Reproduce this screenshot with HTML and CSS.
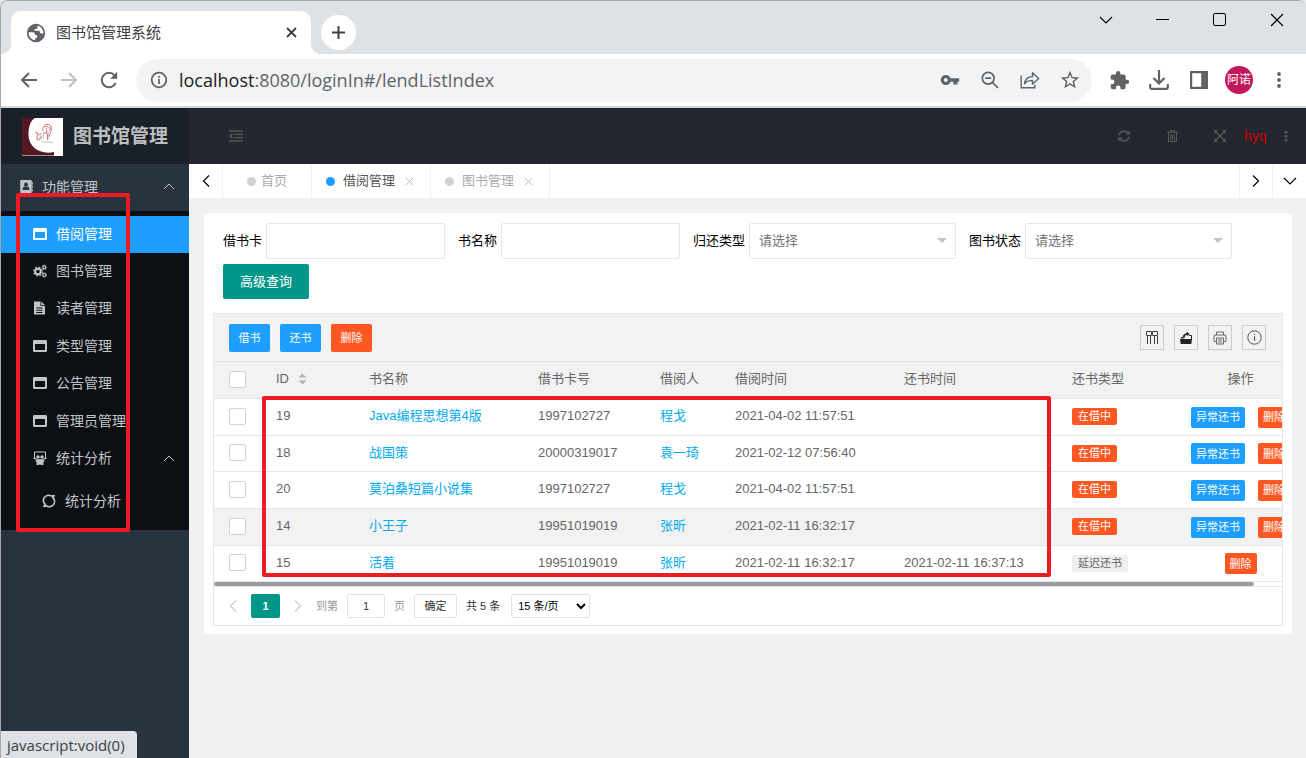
FILE: index.html
```html
<!DOCTYPE html>
<html lang="zh-CN">
<head>
<meta charset="utf-8">
<title>图书馆管理系统</title>
<link rel="stylesheet" href="styles.css">
</head>
<body>
<svg class="sprite" aria-hidden="true">
  <symbol id="i-window" viewBox="0 0 14 12"><path fill="currentColor" fill-rule="evenodd" d="M1.200 0h11.600Q14 0 14 1.200v9.600Q14 12 12.800 12H1.200Q0 12 0 10.800V1.200Q0 0 1.200 0zM2 4v6h10V4z"/></symbol>
  <symbol id="i-left" viewBox="0 0 8 14"><path fill="none" stroke="currentColor" stroke-width="1.200" d="M7 1.500 1.500 7 7 12.500"/></symbol>
  <symbol id="i-right" viewBox="0 0 8 14"><path fill="none" stroke="currentColor" stroke-width="1.200" d="M1 1.500 6.500 7 1 12.500"/></symbol>
  <symbol id="i-up" viewBox="0 0 12 7"><path fill="none" stroke="currentColor" d="M1 6 6 1l5 5"/></symbol>
  <symbol id="i-down" viewBox="0 0 14 8"><path fill="none" stroke="currentColor" stroke-width="1.100" d="M1 1l6 6 6-6"/></symbol>
  <symbol id="i-x" viewBox="0 0 14 14"><path fill="none" stroke="currentColor" stroke-width="1.200" d="M1 1l12 12M13 1 1 13"/></symbol>
  <symbol id="i-close" viewBox="0 0 9 9"><path fill="none" stroke="currentColor" d="M1 1l7 7M8 1 1 8"/></symbol>
</svg>
<div class="window">
  <div class="tabstrip">
    <div class="tab">
      <svg width="20" height="20" viewBox="0 0 24 24"><path fill="#5f6368" d="M12 1a11 11 0 1 0 0 22 11 11 0 0 0 0-22zM11 20.600C6.600 20.100 3.200 16.400 3.200 12l.1-.9h5c1.500 0 2.300 1 2.300 2.200 0 .9.700 1.300 1.500 1.300h1.400v1.600c0 1-.8 1.600-1.500 1.900-.7.300-1 .9-1 1.500zM20.800 12.500h-2.600c-1 0-1.500-.7-1.500-1.600 0-1-.8-1.700-1.800-1.700h-4c-.6 0-1-.4-1-1s.4-1 1-1h1.200c1.100 0 1.600-.8 1.600-1.600V3.300c4.100.7 7.200 4.300 7.200 8.700z"/></svg>
      <span class="tab-title">图书馆管理系统</span>
      <button class="tab-close" aria-label="关闭标签页"><svg width="11" height="11" viewBox="0 0 11 11"><path stroke="#3c4043" stroke-width="1.800" d="M1 1l9 9M10 1l-9 9"/></svg></button>
    </div>
    <button class="new-tab" aria-label="新标签页"><svg width="13" height="13" viewBox="0 0 13 13"><path stroke="#3c4043" stroke-width="2" d="M6.500 0v13M0 6.500h13"/></svg></button>
    <div class="window-controls">
      <button aria-label="标签搜索"><svg width="14" height="8"><use href="#i-down"/></svg></button>
      <button aria-label="最小化"><svg width="13" height="13" viewBox="0 0 13 13"><path stroke="#000" d="M0 6.500h13"/></svg></button>
      <button aria-label="最大化"><svg width="13" height="13" viewBox="0 0 13 13"><rect x=".5" y=".5" width="12" height="12" rx="1.500" fill="none" stroke="#000"/></svg></button>
      <button aria-label="关闭"><svg width="14" height="14"><use href="#i-x"/></svg></button>
    </div>
  </div>

  <div class="toolbar">
    <button class="tool" aria-label="后退"><svg width="18" height="16" viewBox="0 0 18 16"><path fill="none" stroke="#5f6368" stroke-width="2" d="M17 8H2M9 1 2 8l7 7"/></svg></button>
    <button class="tool" aria-label="前进"><svg width="18" height="16" viewBox="0 0 18 16"><path fill="none" stroke="#bdc1c6" stroke-width="2" d="M1 8h15M9 1l7 7-7 7"/></svg></button>
    <button class="tool" aria-label="刷新"><svg width="18" height="18" viewBox="0 0 18 18"><path fill="none" stroke="#5f6368" stroke-width="2" d="M15.600 12A7.200 7.200 0 1 1 14.500 4.400"/><path fill="#5f6368" d="M17.200.800v7h-7z"/></svg></button>
    <div class="omnibox">
      <svg width="18" height="18" viewBox="0 0 18 18"><circle cx="9" cy="9" r="7.300" fill="none" stroke="#5f6368" stroke-width="1.800"/><path fill="#5f6368" d="M8.100 8h1.800v5H8.100zM8.100 5h1.800v1.800H8.100z"/></svg>
      <span class="url"><b>localhost</b>:8080/loginIn#/lendListIndex</span>
      <button class="tool" aria-label="密码"><svg width="20" height="20" viewBox="0 0 24 24"><path fill="#5f6368" d="M12.650 10A6 6 0 0 0 7 6c-3.310 0-6 2.690-6 6s2.690 6 6 6a6 6 0 0 0 5.650-4H16v3.500h5V14h2v-4H12.650zM7 14.300a2.300 2.300 0 1 1 0-4.600 2.300 2.300 0 0 1 0 4.600z"/></svg></button>
      <button class="tool" aria-label="缩放"><svg width="18" height="18" viewBox="0 0 18 18"><g fill="none" stroke="#5f6368" stroke-width="1.700"><circle cx="7.200" cy="7.200" r="5.900"/><path d="M11.500 11.500 17 17M4.300 7.200h5.800"/></g></svg></button>
      <button class="tool" aria-label="分享"><svg width="20" height="18" viewBox="0 0 20 18"><g fill="none" stroke="#5f6368" stroke-width="1.400"><path d="M1.200 4.500v12.300h13.600v-3"/><path stroke-linejoin="round" d="M4.500 12.800c.6-4.600 3.200-7 8-7.200V1.800l6.200 5.700-6.200 5.600V9.400c-3.600 0-6 .9-8 3.400z"/></g></svg></button>
      <button class="tool" aria-label="收藏"><svg width="22" height="22" viewBox="0 0 24 24"><path fill="#5f6368" d="m22 9.240-7.190-.62L12 2 9.190 8.630 2 9.240l5.460 4.730L5.820 21 12 17.270 18.180 21l-1.630-7.030L22 9.240zM12 15.400l-3.760 2.270 1-4.280-3.320-2.880 4.380-.38L12 6.100l1.710 4.040 4.380.38-3.320 2.880 1 4.280L12 15.400z"/></svg></button>
    </div>
    <button class="tool" aria-label="扩展程序"><svg width="21" height="21" viewBox="0 0 24 24"><path fill="#5f6368" d="M20.500 11H19V7a2 2 0 0 0-2-2h-4V3.500a2.500 2.500 0 0 0-5 0V5H4a2 2 0 0 0-1.990 2v3.800H3.500a2.700 2.700 0 0 1 0 5.400H2V20a2 2 0 0 0 2 2h3.800v-1.500a2.700 2.700 0 0 1 5.400 0V22H17a2 2 0 0 0 2-2v-4h1.500a2.500 2.500 0 0 0 0-5z"/></svg></button>
    <button class="tool" aria-label="下载"><svg width="20" height="20" viewBox="0 0 20 20"><path fill="none" stroke="#5f6368" stroke-width="2.200" d="M10 0v13M4.500 8 10 13.500 15.500 8M1.200 14v3.500q0 1.300 1.300 1.300h15q1.300 0 1.300-1.300V14"/></svg></button>
    <button class="tool" aria-label="侧边栏"><svg width="18" height="18" viewBox="0 0 18 18"><path fill="#5f6368" fill-rule="evenodd" d="M0 0h18v18H0zM2.200 2.200v13.600h9V2.200z"/></svg></button>
    <button class="tool" aria-label="用户"><span class="avatar">阿诺</span></button>
    <button class="tool" aria-label="菜单"><svg width="4" height="16" viewBox="0 0 4 16"><g fill="#5f6368"><circle cx="2" cy="2" r="1.900"/><circle cx="2" cy="8" r="1.900"/><circle cx="2" cy="14" r="1.900"/></g></svg></button>
  </div>

  <div class="app">
    <aside class="side">
      <div class="brand">
        <svg width="41" height="38" viewBox="0 0 41 38"><rect width="41" height="38" fill="#541820"/><path fill="#fff" d="M13 0h28v38h-9v-4C18 37 6.500 29 6.500 17 6.500 9 8 3 13 0z"/><path stroke="#a98a8e" d="M0 37.500h32"/><g fill="none" stroke="#d4696c" stroke-width=".9"><path d="M13.500 14c1.500 1 2.500 2 2 4s-1.500 4 .5 4 3-2 3.500-4.500M14 14l4 3 1.500-2M21 13c-1-4 1-6 4-6.500s5 2 4.500 5-2 4-2 7M22 9.500c2-2 4-1 5 1M21.500 16c1-2 3-2 4 0v6M24 10c1 2 1 4 0 6M28 8c1 1.500.5 4-1 5"/><path stroke="#999" stroke-width=".6" d="M20 23.500l5 .5 6 .5M26 13l1 8M17 19l3 3M15 22l4-3M22 14l-1 7"/></g></svg>
        <strong>图书馆管理</strong>
      </div>
      <nav class="menu">
        <a class="group" href="#">
          <svg width="13" height="13" viewBox="0 0 13 13"><path fill="currentColor" d="M1.200 0h9.600q1 0 1 1v11q0 1-1 1H1.200q-1 0-1-1V1q0-1 1-1zM12.200 2h.8v2.500h-.8zM12.200 5.500h.8V8h-.8zM12.200 9h.8v2.500h-.8z"/><circle cx="6" cy="4.500" r="1.900" fill="#28333e"/><path fill="#28333e" d="M2.700 10V8.500Q2.700 7 4.500 6.600h3Q9.300 7 9.300 8.500V10z"/></svg>
          <span>功能管理</span>
          <svg class="caret" width="12" height="7"><use href="#i-up"/></svg>
        </a>
        <ul class="submenu">
          <li><a class="active" href="#"><svg width="14" height="12"><use href="#i-window"/></svg>借阅管理</a></li>
          <li><a href="#"><svg width="14" height="14" viewBox="0 0 14 14"><g fill="none" stroke="currentColor"><circle cx="5" cy="7.500" r="2.800" stroke-width="2"/><circle cx="5" cy="7.500" r="4.300" stroke-width="1.300" stroke-dasharray="1.700 1.677"/><circle cx="11.300" cy="3.300" r="1.500" stroke-width="1.200"/><circle cx="11.300" cy="3.300" r="2.300" stroke-width=".8" stroke-dasharray="1 .8"/><circle cx="11.300" cy="11" r="1.500" stroke-width="1.200"/><circle cx="11.300" cy="11" r="2.300" stroke-width=".8" stroke-dasharray="1 .8"/></g></svg>图书管理</a></li>
          <li><a href="#"><svg width="14" height="14" viewBox="0 0 14 14"><path fill="currentColor" fill-rule="evenodd" d="M1 .5h6.500V5H12v8.500H1zM8.300.5 12 4.200H8.300zM3.300 6.500v1h6.200v-1zM3.300 8.700v1h6.200v-1zM3.300 10.900v1h6.200v-1z"/></svg>读者管理</a></li>
          <li><a href="#"><svg width="14" height="12"><use href="#i-window"/></svg>类型管理</a></li>
          <li><a href="#"><svg width="14" height="12"><use href="#i-window"/></svg>公告管理</a></li>
          <li><a href="#"><svg width="14" height="12"><use href="#i-window"/></svg>管理员管理</a></li>
          <li><a href="#"><svg width="14" height="14" viewBox="0 0 14 14"><path fill="none" stroke="currentColor" d="M1.500 7V1h11v6M.3 7.500h3M10.700 7.500h3"/><g fill="currentColor"><circle cx="5" cy="6" r="1.800"/><circle cx="9" cy="6" r="1.800"/><path d="M2.600 8.200h8.800v2.600h-1V14H7.400v-1h-.8v1h-3v-3.200h-1z"/></g></svg>统计分析<svg class="caret" width="12" height="7"><use href="#i-up"/></svg></a></li>
        </ul>
        <ul class="submenu nested">
          <li><a href="#"><svg width="14" height="14" viewBox="0 0 14 14"><g fill="none" stroke="currentColor" stroke-width="1.600"><path d="M12.800 1.500 9.300 2A5 5 0 0 0 3.900 11M1.200 12.500l3.500-.5a5 5 0 0 0 5.400-9"/><path stroke-width="1.200" d="M12.800 1.500 10.100 3.500M1.200 12.500 4 10.600"/></g></svg>统计分析</a></li>
        </ul>
      </nav>
      <div class="mark mark-menu"></div>
    </aside>

    <main class="main">
      <header class="topbar">
        <button aria-label="收起菜单"><svg width="14" height="12" viewBox="0 0 14 12"><path stroke="currentColor" stroke-width="1.300" d="M0 1h14M5 4.300h9M5 7.600h9M0 11h14"/><path fill="currentColor" d="M3.500 3v6L0 6z"/></svg></button>
        <span class="spacer"></span>
        <button aria-label="刷新"><svg width="12" height="12" viewBox="0 0 12 12"><g fill="none" stroke="currentColor" stroke-width="1.700"><path d="M1 5.200A5 5 0 0 1 9.800 3M11 6.800A5 5 0 0 1 2.200 9"/></g><path fill="currentColor" d="M12 .5v4.300H7.700zM0 11.500V7.200h4.300z"/></svg></button>
        <button aria-label="清理缓存"><svg width="11" height="12" viewBox="0 0 11 12"><g fill="none" stroke="currentColor" stroke-width="1.100"><path d="M0 2.300h11M3.300 2.300V.6h4.400v1.700M1.500 2.500v8.900h8V2.500M3.700 4.500V9.800M5.500 4.500V9.800M7.300 4.500V9.800"/></g></svg></button>
        <button aria-label="全屏"><svg width="12" height="12" viewBox="0 0 12 12"><path stroke="currentColor" stroke-width="1.600" d="M2 2l8 8M10 2l-8 8"/><path fill="currentColor" d="M0 0h4.200L0 4.200zM12 0v4.200L7.800 0zM0 12V7.800L4.200 12zM12 12H7.800L12 7.800z"/></svg></button>
        <a class="user" href="#">hyq</a>
        <button class="more" aria-label="更多"><svg width="4" height="11" viewBox="0 0 4 11"><path fill="currentColor" d="M.5 0h3v2.600h-3zM.5 4h3v2.600h-3zM.5 8h3v2.600h-3z"/></svg></button>
      </header>

      <div class="pages">
        <button class="page-nav first" aria-label="向左"><svg width="8" height="14"><use href="#i-left"/></svg></button>
        <a class="page home" href="#"><i></i>首页</a>
        <a class="page current" href="#"><i></i>借阅管理<svg width="9" height="9"><use href="#i-close"/></svg></a>
        <a class="page" href="#"><i></i>图书管理<svg width="9" height="9"><use href="#i-close"/></svg></a>
        <span class="spacer"></span>
        <button class="page-nav" aria-label="向右"><svg width="8" height="14"><use href="#i-right"/></svg></button>
        <button class="page-nav last" aria-label="页面操作"><svg width="14" height="8"><use href="#i-down"/></svg></button>
      </div>

      <section class="card">
        <form class="search">
          <div class="field"><label for="card">借书卡</label><input id="card" type="text"></div>
          <div class="field"><label for="book">书名称</label><input id="book" type="text"></div>
          <div class="field"><label for="kind">归还类型</label><span class="pick"><select id="kind"><option>请选择</option></select></span></div>
          <div class="field"><label for="state">图书状态</label><span class="pick"><select id="state"><option>请选择</option></select></span></div>
          <button class="query" type="button">高级查询</button>
        </form>

        <div class="grid">
          <div class="grid-tools">
            <button class="btn blue">借书</button>
            <button class="btn blue">还书</button>
            <button class="btn red">删除</button>
            <span class="spacer"></span>
            <button class="icon-btn" aria-label="筛选列"><svg width="14" height="14" viewBox="0 0 14 14"><path fill="none" stroke="#444" d="M1.500.5h5v4h-5zM7.500.5h5v4h-5zM2.500 5v8M5.500 5v8M9.500 5v8M12.500 5v8"/></svg></button>
            <button class="icon-btn" aria-label="导出"><svg width="14" height="14" viewBox="0 0 14 14"><path fill="#222" d="M1 8h12l-.7 5H1.700zM2 7.500V6h3v1.500zM5.700 7c0-2 .5-3 2-3.200V5.200L10.700 3 7.700.8V2C5 2.500 3.700 4.500 3.700 6z"/><path fill="none" stroke="#222" d="M10 4.500h2.500V8"/></svg></button>
            <button class="icon-btn" aria-label="打印"><svg width="14" height="14" viewBox="0 0 14 14"><g fill="none" stroke="#666"><path d="M3.500 4V1h7v3M3 10.500H1.500Q1 10.500 1 10V5Q1 4 2 4h10q1 0 1 1v5q0 .5-.5.500H11M3.500 7h7v6h-7zM5 9h4M5 11h4"/></g></svg></button>
            <button class="icon-btn" aria-label="提示"><svg width="15" height="15" viewBox="0 0 15 15"><circle cx="7.500" cy="7.500" r="6.700" fill="none" stroke="#555"/><path fill="#555" d="M7 6.300h1.100v4.500H7zM7 3.900h1.100V5H7z"/></svg></button>
          </div>
          <div class="grid-scroll">
            <table>
              <colgroup><col class="w-check"><col class="w-id"><col class="w-wide"><col class="w-card"><col class="w-name"><col class="w-wide"><col class="w-back"><col class="w-type"><col class="w-op"></colgroup>
              <thead>
                <tr><th><input type="checkbox" aria-label="全选"></th><th>ID<svg class="sort" width="9" height="12" viewBox="0 0 9 12"><path fill="#b2b2b2" d="M.500 4.500 4.500.500l4 4zM.500 7.500l4 4 4-4z"/></svg></th><th>书名称</th><th>借书卡号</th><th>借阅人</th><th>借阅时间</th><th>还书时间</th><th>还书类型</th><th class="op">操作</th></tr>
              </thead>
              <tbody>
                <tr><td><input type="checkbox" aria-label="选择 19"></td><td>19</td><td><a href="#">Java编程思想第4版</a></td><td>1997102727</td><td><a href="#">程戈</a></td><td>2021-04-02 11:57:51</td><td></td><td><span class="badge">在借中</span></td><td class="op"><button class="mini blue">异常还书</button><button class="mini red">删除</button></td></tr>
                <tr><td><input type="checkbox" aria-label="选择 18"></td><td>18</td><td><a href="#">战国策</a></td><td>20000319017</td><td><a href="#">袁一琦</a></td><td>2021-02-12 07:56:40</td><td></td><td><span class="badge">在借中</span></td><td class="op"><button class="mini blue">异常还书</button><button class="mini red">删除</button></td></tr>
                <tr><td><input type="checkbox" aria-label="选择 20"></td><td>20</td><td><a href="#">莫泊桑短篇小说集</a></td><td>1997102727</td><td><a href="#">程戈</a></td><td>2021-04-02 11:57:51</td><td></td><td><span class="badge">在借中</span></td><td class="op"><button class="mini blue">异常还书</button><button class="mini red">删除</button></td></tr>
                <tr class="hover"><td><input type="checkbox" aria-label="选择 14"></td><td>14</td><td><a href="#">小王子</a></td><td>19951019019</td><td><a href="#">张昕</a></td><td>2021-02-11 16:32:17</td><td></td><td><span class="badge">在借中</span></td><td class="op"><button class="mini blue">异常还书</button><button class="mini red">删除</button></td></tr>
                <tr><td><input type="checkbox" aria-label="选择 15"></td><td>15</td><td><a href="#">活着</a></td><td>19951019019</td><td><a href="#">张昕</a></td><td>2021-02-11 16:32:17</td><td>2021-02-11 16:37:13</td><td><span class="badge grey">延迟还书</span></td><td class="op"><button class="mini red">删除</button></td></tr>
              </tbody>
            </table>
            <div class="scrollbar"><div class="thumb"></div></div>
            <div class="mark mark-rows"></div>
          </div>
          <div class="pager">
            <button class="step" aria-label="上一页"><svg width="8" height="14"><use href="#i-left"/></svg></button>
            <button class="page-no">1</button>
            <button class="step" aria-label="下一页"><svg width="8" height="14"><use href="#i-right"/></svg></button>
            <label for="goto">到第</label>
            <input id="goto" type="text" value="1">
            <span class="muted">页</span>
            <button class="ok">确定</button>
            <span>共 5 条</span>
            <select aria-label="每页条数"><option>15 条/页</option></select>
          </div>
        </div>
      </section>
    </main>
  </div>
  <div class="status">javascript:void(0)</div>
</div>
</body>
</html>
```
FILE: styles.css
```css
* { box-sizing: border-box; }
body {
  margin: 0;
  background: #e8e8e8;
  font: 13px/20px "Liberation Sans", "Noto Sans CJK SC", sans-serif;
  color: #000;
}
button, input, select { font: inherit; color: inherit; margin: 0; }
button { border: 0; padding: 0; background: none; cursor: pointer; display: flex; align-items: center; justify-content: center; }
a { color: inherit; text-decoration: none; }
ul { list-style: none; margin: 0; padding: 0; }
svg { flex: none; }
.sprite { display: none; }
.spacer { flex: 1; }

.window {
  position: relative;
  display: flex;
  flex-direction: column;
  height: 100vh;
  border-top: 1px solid #a8a8a8;
  border-left: 1px solid #a8a8a8;
  border-radius: 8px 8px 0 0;
  background: #fff;
  overflow: hidden;
}

/* Browser tabs */
.tabstrip { display: flex; height: 53px; padding-left: 10px; background: #dee1e6; flex: none; }
.tab {
  position: relative;
  display: flex;
  align-items: center;
  width: 300px;
  height: 43px;
  margin-top: 10px;
  padding: 0 14px 0 15px;
  border-radius: 10px 10px 0 0;
  background: #fff;
}
.tab::before, .tab::after { content: ""; position: absolute; bottom: 0; width: 10px; height: 10px; }
.tab::before { right: 100%; background: radial-gradient(circle at 0 0, #dee1e6 10px, #fff 10px); }
.tab::after { left: 100%; background: radial-gradient(circle at 100% 0, #dee1e6 10px, #fff 10px); }
.tab-title { flex: 1; margin-left: 10px; font-size: 15px; color: #3c4043; }
.tab-close { width: 12px; height: 20px; }
.new-tab { width: 35px; height: 35px; margin: 14px 0 0 10px; border-radius: 50%; background: #fff; }
.window-controls { display: flex; margin-left: auto; padding-right: 1px; }
.window-controls button { width: 57px; height: 37px; }

/* Browser toolbar */
.toolbar { display: flex; align-items: center; height: 54px; padding: 0 7px 0 8px; border-bottom: 2px solid #d6d9dc; background: #fff; flex: none; }
.tool { width: 40px; height: 40px; flex: none; }
.omnibox { display: flex; align-items: center; flex: 1; height: 43px; margin: 0 7px; padding: 0 2px 0 14px; border-radius: 22px; background: #f1f3f4; }
.url { flex: 1; margin-left: 11px; font: 18px/24px "Open Sans", sans-serif; color: #5f6368; }
.url b { font-weight: 400; color: #202124; }
.avatar { width: 28px; height: 28px; border-radius: 50%; background: #c2185b; color: #fff; font-size: 12px; line-height: 28px; text-align: center; }

/* Sidebar */
.app { display: flex; flex: 1; min-height: 0; }
.side { position: relative; width: 188px; background: #28333e; color: #c2c5c8; flex: none; }
.brand { display: flex; align-items: center; gap: 10px; height: 56px; padding: 2px 0 0 21px; background: #192027; color: #bcbdbf; }
.brand strong { font-size: 19px; line-height: 28px; }
.menu { font-size: 14px; }
.menu a { display: flex; align-items: center; height: 100%; padding: 0 14px 2px 32px; gap: 9px; white-space: nowrap; }
.menu .group { height: 47px; padding-left: 19px; }
.caret { margin-left: auto; }
.submenu { padding-top: 5px; background: #0c0f13; }
.submenu li { height: 37px; }
.submenu li:nth-child(odd):not(:first-child) { height: 38px; }
.submenu .active { background: #1e9fff; color: #fff; }
.nested { padding-bottom: 10px; }
.menu .nested a { padding-left: 41px; }

.mark { position: absolute; border: 4px solid #ed1c24; border-radius: 2px; pointer-events: none; }
.mark-menu { left: 15px; top: 85px; width: 114px; height: 339px; }
.mark-rows { left: 48px; top: 34px; width: 789px; height: 181px; }

/* Application header and page tabs */
.main { flex: 1; min-width: 0; background: #f1f1f1; }
.topbar { display: flex; align-items: center; height: 56px; padding: 0 16px 0 23px; background: #23262e; color: #555; }
.topbar button { width: 48px; height: 48px; }
.topbar .more { width: 8px; }
.user { width: 38px; font-size: 14px; color: #c80000; }
.pages { display: flex; height: 34px; background: #fff; }
.page, .page-nav { display: flex; align-items: center; height: 34px; }
.page-nav { width: 33px; border-left: 1px solid #f1f1f1; }
.page-nav.first { border-left: 0; border-right: 1px solid #f1f1f1; width: 34px; }
.page-nav.last { width: 34px; }
.page { padding: 0 16px 0 14px; border-right: 1px solid #f1f1f1; color: #aaa; }
.page i { width: 9px; height: 9px; margin-right: 8px; border-radius: 50%; background: #d2d2d2; }
.page svg { margin-left: 10px; color: #bbb; }
.page.current { color: #555; }
.page.current i { background: #1e9fff; }
.page.home { padding: 0 24px; }
.page.home i { margin-right: 5px; }

/* Search form */
.card { margin: 15px 14px 0 15px; padding: 10px 9px 8px; border-radius: 4px; background: #fff; }
.search { display: flex; flex-wrap: wrap; gap: 5px 13px; padding: 0 10px; }
.field { display: flex; align-items: center; gap: 4px; }
.field input, .field select { height: 36px; border: 1px solid #e6e6e6; border-radius: 2px; background: #fff; outline: 0; }
.field input { width: 179px; padding: 0 10px; }
.pick { position: relative; display: block; }
.pick::after { content: ""; position: absolute; right: 9px; top: 15px; border: 5px solid transparent; border-top-color: #c2c2c2; pointer-events: none; }
.pick select { appearance: none; display: block; width: 207px; padding: 0 9px; color: #757575; }
.query { width: 86px; height: 35px; border-radius: 2px; background: #009688; color: #fff; }

/* Data grid */
.grid { margin-top: 14px; border: 1px solid #e6e6e6; }
.grid-tools { display: flex; align-items: center; gap: 10px; height: 48px; padding: 0 16px 0 15px; border-bottom: 1px solid #e6e6e6; background: #f2f2f2; }
.btn, .mini { border-radius: 2px; color: #fff; font-size: 11px; }
.btn { width: 41px; height: 28px; }
.blue { background: #1e9fff; }
.red { background: #ff5722; }
.icon-btn { width: 24px; height: 25px; border: 1px solid #ccc; }
.grid-scroll { position: relative; overflow: hidden; }
table { width: 100%; min-width: 1097px; table-layout: fixed; border-collapse: separate; border-spacing: 0; color: #666; }
.w-check { width: 48px; }
.w-id { width: 93px; }
.w-wide { width: 169px; }
.w-card { width: 122px; }
.w-name { width: 75px; }
.w-back { width: 168px; }
.w-type { width: 112px; }
.w-op { width: 141px; }
th, td { height: 37px; padding: 0 14px 2px; border-bottom: 1px solid #e6e6e6; text-align: left; font-weight: 400; white-space: nowrap; }
tbody tr:nth-child(3n+2) td { height: 36px; }
thead tr, .hover { background: #f2f2f2; }
td a { color: #01aaed; }
.sort { margin-left: 9px; vertical-align: -2px; }
table input { appearance: none; display: block; width: 17px; height: 17px; margin-left: 1px; border: 1px solid #d2d2d2; border-radius: 2px; background: #fff; }
.badge { display: inline-block; padding: 0 6px; border-radius: 2px; background: #ff5722; color: #fff; font-size: 11px; line-height: 17px; vertical-align: middle; }
.badge.grey { background: #eee; color: #666; }
th.op, td.op { text-align: center; }
td.op { padding: 0; }
.mini { display: inline-flex; height: 21px; padding: 0 5px; vertical-align: middle; }
.mini + .mini { margin-left: 13px; }
.scrollbar { height: 4px; }
.thumb { width: 1040px; height: 4px; border-radius: 2px; background: #9b9ca1; }

/* Pager */
.pager { display: flex; align-items: center; height: 39px; padding: 0 12px; border-top: 1px solid #e6e6e6; gap: 9px; font-size: 11px; color: #333; }
.step { width: 14px; height: 24px; color: #ccc; }
.page-no { width: 29px; height: 24px; margin: 0 2px; border-radius: 2px; background: #009688; color: #fff; font-weight: 700; }
.pager label, .muted { color: #999; }
.pager label, .pager select { margin-left: 2px; }
.pager input { width: 38px; height: 24px; border: 1px solid #e2e2e2; border-radius: 2px; text-align: center; }
.ok { width: 43px; height: 24px; border: 1px solid #e2e2e2; border-radius: 2px; }
.pager select { width: 79px; height: 24px; padding: 0 2px; border: 1px solid #e2e2e2; border-radius: 2px; background: #fff; color: #000; }

.status { position: absolute; left: -1px; bottom: 0; height: 27px; padding: 0 12px 0 7px; border-radius: 0 4px 0 0; background: #dee1e6; color: #3c4043; font: 15px/28px "Open Sans", sans-serif; }
```
